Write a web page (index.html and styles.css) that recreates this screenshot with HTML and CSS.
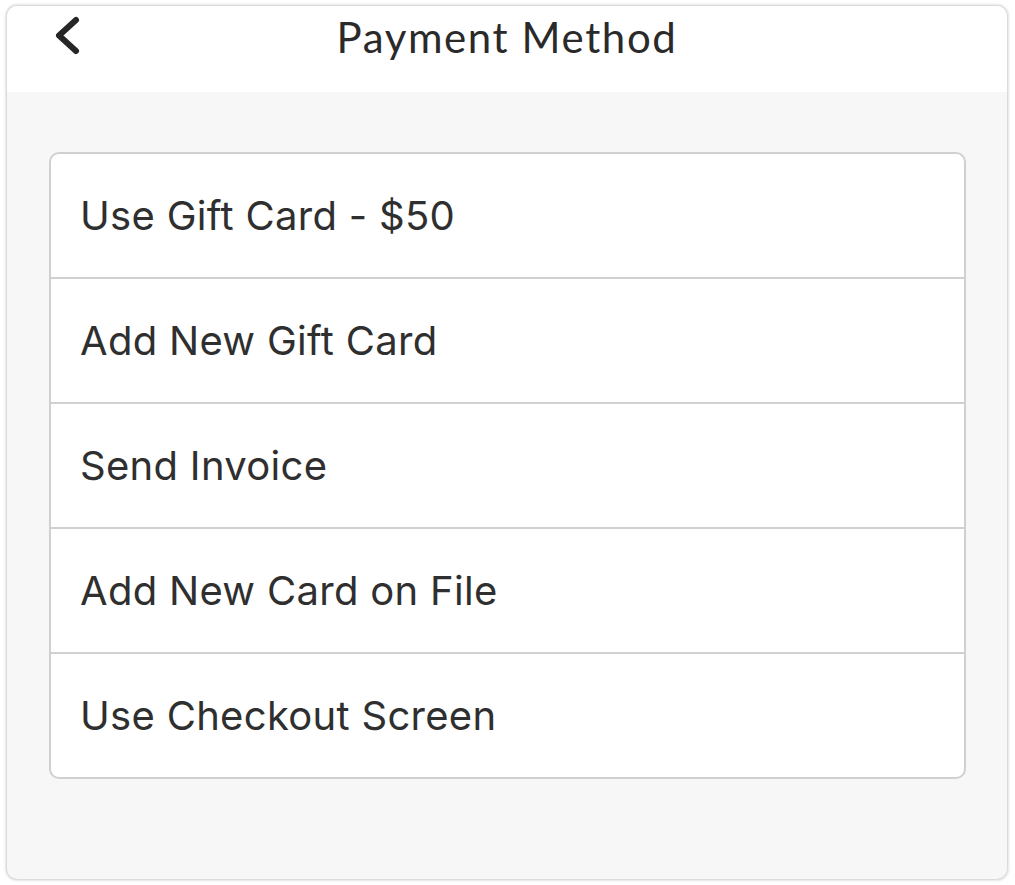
FILE: index.html
```html
<!DOCTYPE html>
<html lang="en">
<head>
    <meta charset="UTF-8">
    <meta name="viewport" content="width=device-width, initial-scale=1.0">
    <title>Payment Method</title>
    <link rel="stylesheet" href="styles.css">
</head>
<body>
    <div class="frame">
        <!-- Top bar -->
        <header class="topbar">
            <a href="#" class="back" aria-label="Back">
                <svg width="30" height="44" viewBox="0 0 30 44">
                    <polyline points="23,6 6,21.5 23,37" fill="none" stroke="#262626" stroke-width="6" stroke-linecap="round" stroke-linejoin="round"/>
                </svg>
            </a>
            <h1>Payment Method</h1>
            <span></span>
        </header>

        <!-- Options -->
        <ul class="options">
            <li>Use Gift Card - $50</li>
            <li>Add New Gift Card</li>
            <li>Send Invoice</li>
            <li>Add New Card on File</li>
            <li>Use Checkout Screen</li>
        </ul>
    </div>
</body>
</html>
```

FILE: styles.css
```css
:root {
    --text-color: #2f2f2f;
    --line-color: #d0d0d0;
    --panel-bg: #f7f7f7;
}

* {
    margin: 0;
    padding: 0;
    box-sizing: border-box;
}

body {
    background-color: #fff;
    font-family: 'Inter', 'Liberation Sans', sans-serif;
    color: var(--text-color);
    padding: 6px 8px 6px 7px;
}

.frame {
    width: 1000px;
    height: 873px;
    background-color: var(--panel-bg);
    border-radius: 10px;
    box-shadow: 0 0 3px 1px rgba(0,0,0,0.22);
    overflow: hidden;
}

.topbar {
    height: 86px;
    background-color: #fff;
    display: grid;
    grid-template-columns: 1fr auto 1fr;
    align-items: start;
    padding-top: 8px;
}

.back {
    display: block;
    width: 30px;
    height: 44px;
    margin-left: 46px;
}

.back svg {
    display: block;
}

h1 {
    font-family: 'Lato', 'Liberation Sans', sans-serif;
    font-weight: 400;
    font-size: 42px;
    line-height: 46px;
    letter-spacing: 1.6px;
    color: #2a2a2a;
}

.options {
    list-style: none;
    margin: 60px 41px 0 42px;
    background-color: #fff;
    border: 2px solid var(--line-color);
    border-radius: 10px;
}

.options li {
    height: 125px;
    display: flex;
    align-items: center;
    padding-left: 29px;
    font-size: 40px;
    letter-spacing: 0.3px;
    border-top: 2px solid var(--line-color);
}

.options li:first-child {
    height: 123px;
    border-top: none;
}
```
